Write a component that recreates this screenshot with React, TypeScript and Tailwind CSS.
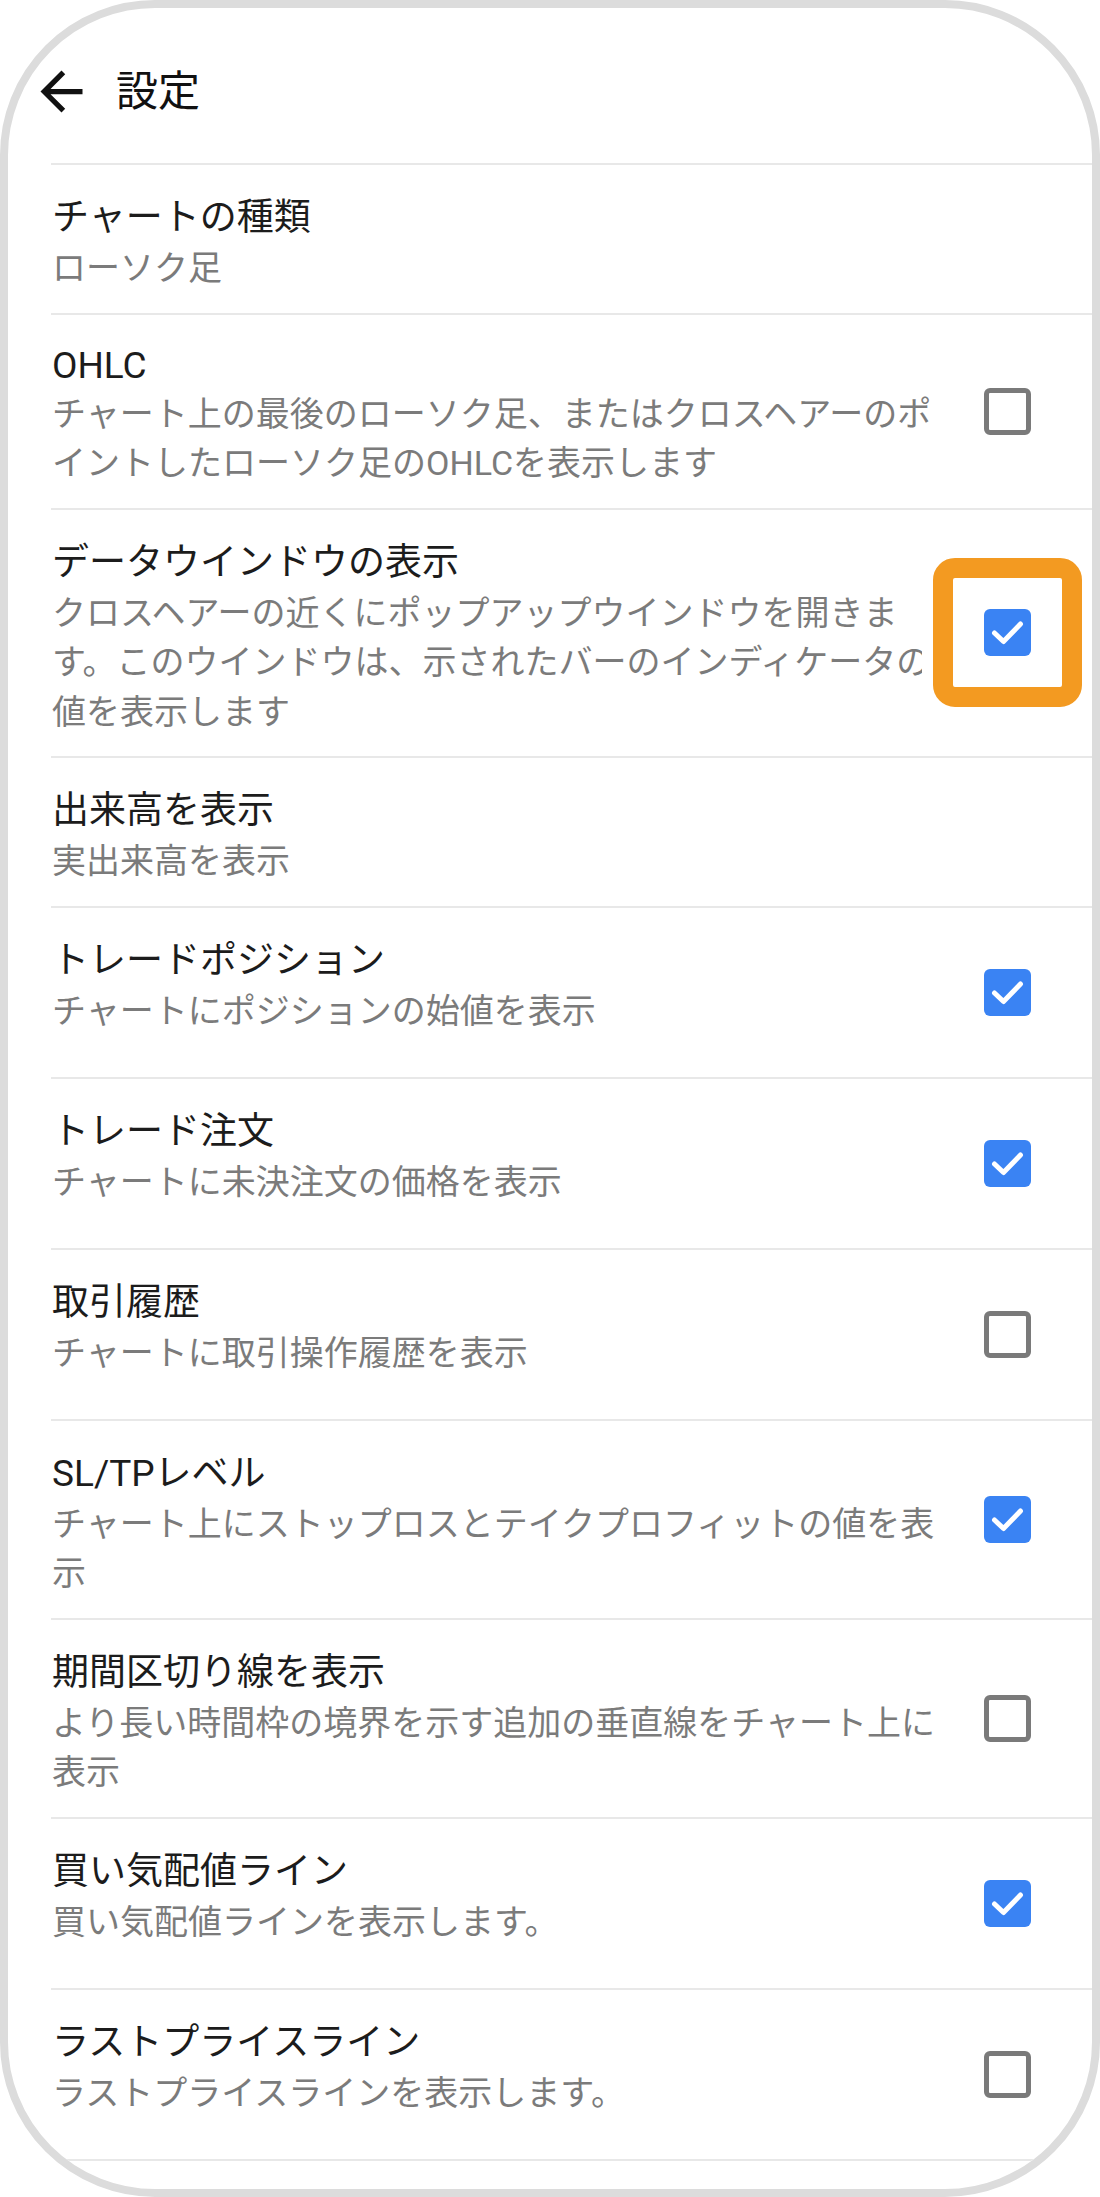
import React from 'react';

type Setting = {
  title: string;
  desc: string;
  checked?: boolean;
  latinTitle?: boolean;
  highlight?: boolean;
};

const settings: Setting[] = [
  { title: 'チャートの種類', desc: 'ローソク足' },
  {
    title: 'OHLC',
    desc: 'チャート上の最後のローソク足、またはクロスヘアーのポイントしたローソク足のOHLCを表示します',
    checked: false,
    latinTitle: true,
  },
  {
    title: 'データウインドウの表示',
    desc: 'クロスヘアーの近くにポップアップウインドウを開きます。このウインドウは、示されたバーのインディケータの値を表示します',
    checked: true,
    highlight: true,
  },
  { title: '出来高を表示', desc: '実出来高を表示' },
  { title: 'トレードポジション', desc: 'チャートにポジションの始値を表示', checked: true },
  { title: 'トレード注文', desc: 'チャートに未決注文の価格を表示', checked: true },
  { title: '取引履歴', desc: 'チャートに取引操作履歴を表示', checked: false },
  { title: 'SL/TPレベル', desc: 'チャート上にストップロスとテイクプロフィットの値を表示', checked: true },
  { title: '期間区切り線を表示', desc: 'より長い時間枠の境界を示す追加の垂直線をチャート上に表示', checked: false },
  { title: '買い気配値ライン', desc: '買い気配値ラインを表示します。', checked: true },
  { title: 'ラストプライスライン', desc: 'ラストプライスラインを表示します。', checked: false },
];

function Checkbox({ checked }: { checked: boolean }) {
  if (checked) {
    return (
      <div className="w-[47px] h-[47px] rounded-[6px] bg-[#3a83f3] flex items-center justify-center">
        <svg width="47" height="47" viewBox="0 0 47 47" fill="none">
          <polyline
            points="10.5,24 19.5,32.5 36.5,15"
            stroke="white"
            strokeWidth="5"
            strokeLinecap="round"
            strokeLinejoin="round"
          />
        </svg>
      </div>
    );
  }
  return <div className="w-[47px] h-[47px] rounded-[6px] border-[5px] border-[#7a7a7a]" />;
}

function SettingRow({ item }: { item: Setting }) {
  const hasBox = item.checked !== undefined;
  return (
    <div className={`flex border-t-2 border-[#e8e8e8] ${hasBox ? 'min-h-[171px]' : ''}`}>
      <div className="flex-1 min-w-0 pt-[27px] pb-[19px] pl-px">
        <div
          className={`text-[37px] text-[#1c1c1c] ${item.latinTitle ? 'leading-[48px]' : 'leading-[52px]'}`}
        >
          {item.title}
        </div>
        <div className="text-[34px] leading-[49.5px] text-[#7b7b7b]">{item.desc}</div>
      </div>
      {hasBox && (
        <div className="self-center ml-[37px] mr-[61px] relative">
          <Checkbox checked={!!item.checked} />
          {item.highlight && (
            <div className="absolute -inset-[51px] border-[20px] border-[#f39a21] rounded-[22px] shadow-[0_0_0_11px_white]" />
          )}
        </div>
      )}
    </div>
  );
}

export default function App() {
  return (
    <div
      lang="ja"
      className="w-[1100px] h-[2197px] bg-white border-[8px] border-[#dcdcdc] rounded-[155px] overflow-hidden"
      style={{ fontFamily: 'Roboto, "Noto Sans CJK JP", sans-serif' }}
    >
      <div className="h-[155px] pt-[12px] pl-[22px] flex items-center">
        <svg width="63" height="63" viewBox="0 0 24 24" fill="#111111">
          <path d="M20 11H7.83l5.59-5.59L12 4l-8 8 8 8 1.41-1.41L7.83 13H20v-2z" />
        </svg>
        <span className="ml-[23px] text-[42px] leading-[56px] text-[#111111]">設定</span>
      </div>
      <div className="ml-[43px] border-b-2 border-[#e8e8e8]">
        {settings.map((item) => (
          <SettingRow key={item.title} item={item} />
        ))}
      </div>
    </div>
  );
}
